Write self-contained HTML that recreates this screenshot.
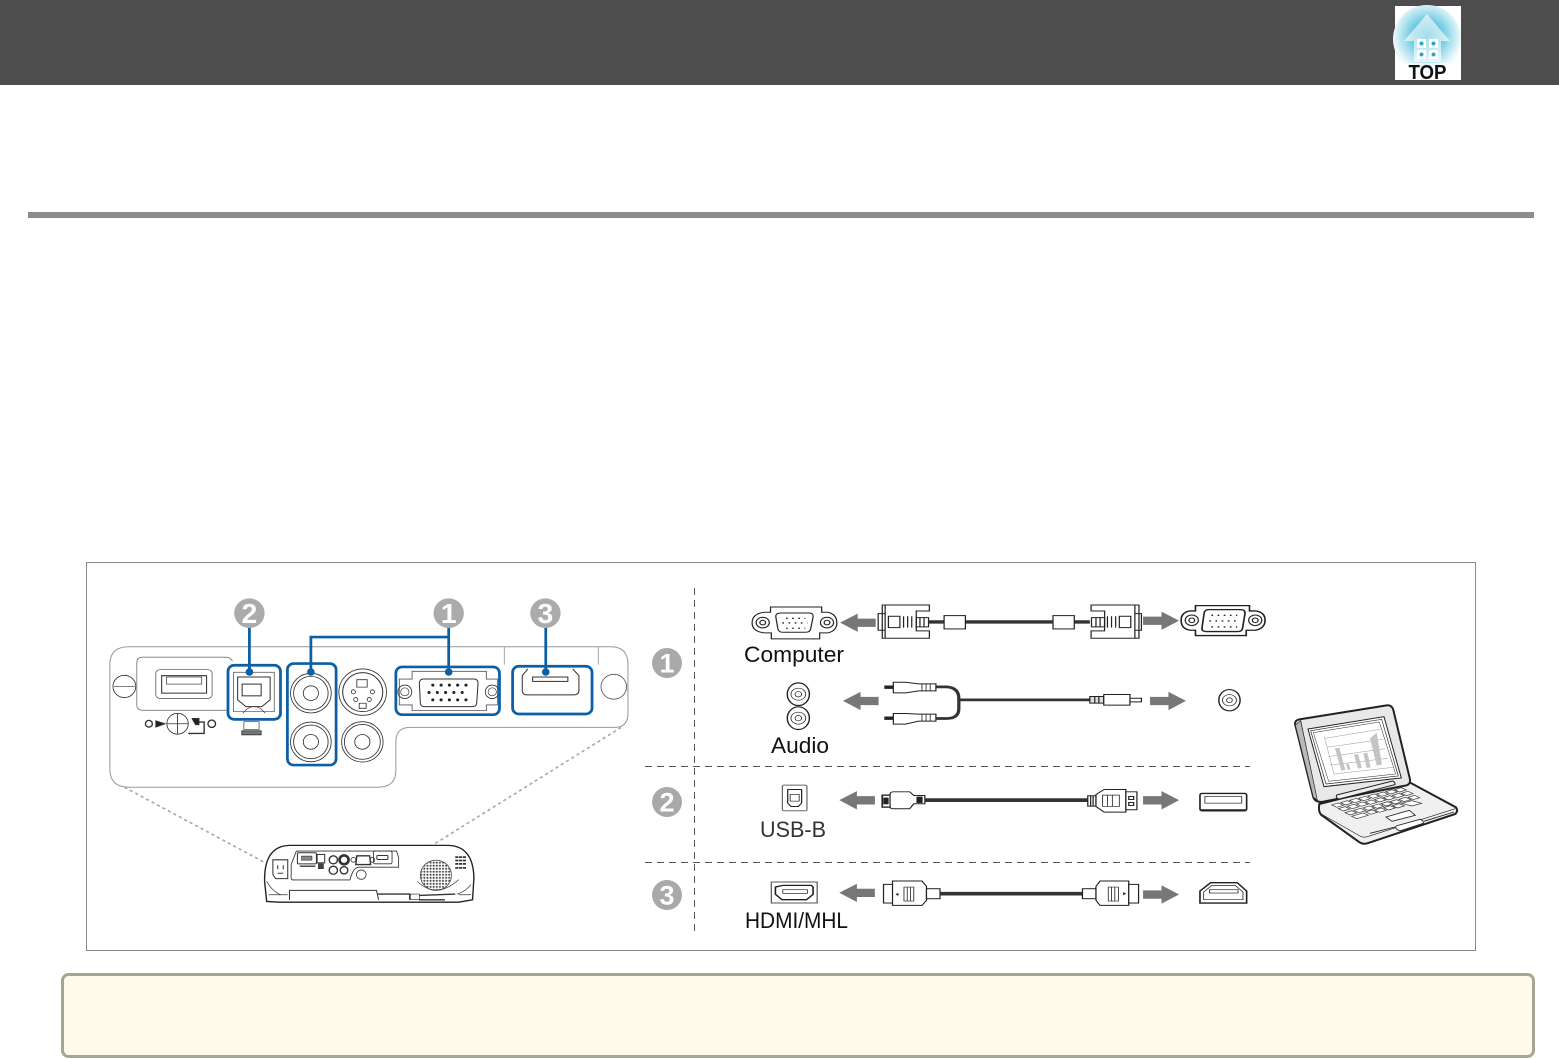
<!DOCTYPE html>
<html><head><meta charset="utf-8"><title>Connecting</title>
<style>
html,body{margin:0;padding:0;background:#fff;width:1559px;height:1059px;overflow:hidden}
svg{position:absolute;left:0;top:0}
text{font-family:"Liberation Sans",sans-serif}
.soft{filter:blur(.35px)}
</style></head><body>
<svg width="1559" height="1059" viewBox="0 0 1559 1059" xmlns="http://www.w3.org/2000/svg">
<defs>
<radialGradient id="g" cx=".5" cy=".45" r=".5"><stop offset="0" stop-color="#14a2cc"/><stop offset=".35" stop-color="#55bfdc"/><stop offset=".7" stop-color="#a8e0ee"/><stop offset="1" stop-color="#eef9fc"/></radialGradient>
<pattern id="dots" width="9" height="9" patternUnits="userSpaceOnUse"><rect width="9" height="9" fill="#fff"/><circle cx="4.500" cy="4.500" r="3" fill="#444"/></pattern>
<symbol id="al" overflow="visible"><path d="M0 27 L43 0 V15 H87 V40 H43 V55Z" fill="#777" stroke="none"/></symbol>
<symbol id="ar" overflow="visible"><path d="M88 27 L45 0 V15 H0 V40 H45 V55Z" fill="#777" stroke="none"/></symbol>
</defs>
<!-- page chrome -->
<rect x="0" y="0" width="1559" height="85" fill="#4d4d4d"/>
<rect x="1395" y="6" width="66" height="74" fill="#fff"/>
<circle cx="1427" cy="39" r="34" fill="url(#g)"/>
<path d="M1427 14 L1450 41 H1441 V62 H1414 V41 H1404Z" fill="#fff" fill-opacity=".62"/>
<g fill="#fff"><rect x="1417" y="39" width="9" height="9" rx="1"/><rect x="1429" y="39" width="9" height="9" rx="1"/><rect x="1417" y="50" width="9" height="9" rx="1"/><rect x="1429" y="50" width="9" height="9" rx="1"/></g>
<g fill="#2aa6cc"><circle cx="1421.500" cy="43.500" r="2"/><circle cx="1433.500" cy="43.500" r="2"/><circle cx="1421.500" cy="54.500" r="2"/><circle cx="1433.500" cy="54.500" r="2"/></g>
<rect x="1405" y="63" width="44" height="17" fill="#fff" fill-opacity=".55"/>
<text x="1408.500" y="79" font-size="20" font-weight="700" fill="#111" textLength="38" lengthAdjust="spacingAndGlyphs">TOP</text>
<rect x="28" y="212" width="1506" height="6" fill="#8c8c8c"/>
<rect x="86.500" y="562.500" width="1389" height="388" fill="#fff" stroke="#8a8a8a"/>
<rect x="62.500" y="974.500" width="1471" height="82" rx="6" fill="#fffbea" stroke="#aaa593" stroke-width="3"/>
<!-- dashed separators -->
<g stroke="#555" stroke-width="1" stroke-dasharray="7 5" fill="none">
<path d="M694.500 588 V932"/><path d="M645 766.500 H1250"/><path d="M645 862.500 H1250"/>
</g>
<!-- left panel: zoom coordinates -->
<g class="soft" transform="translate(99.500 589) scale(.3454 .336)" fill="none" stroke="#333" stroke-width="2.500">
<path d="M30 225 Q30 172 85 172 H1480 Q1530 172 1530 225 V370 Q1530 412 1490 412 H900 Q858 412 858 455 V540 Q858 590 805 590 H85 Q30 590 30 535Z" stroke="#999" stroke-width="3"/>
<path d="M1172 172 V225 M1444 172 V225" stroke="#999"/>
<path d="M385 215 Q380 203 365 203 H125 Q108 203 108 220 V345 Q108 361 125 361 H370" stroke="#777"/>
<circle cx="72" cy="290" r="33"/><path d="M42 290 H102" stroke-width="2"/>
<rect x="163" y="240" width="163" height="86" rx="12" stroke="#666"/>
<path d="M180 258 H310 V310 H180Z" stroke-width="3"/>
<rect x="194" y="262" width="102" height="21" stroke-width="2"/>
<!-- lock symbol -->
<circle cx="143" cy="401" r="10" stroke-width="4"/><path d="M163 392 L190 401 L163 411Z" fill="#222"/>
<circle cx="226" cy="401" r="31"/><path d="M195 401 H257 M226 370 V432"/>
<path d="M268 386 H287 V396 H303 V430 H257" stroke-width="4"/><path d="M268 386 H288 V404 H278Z" fill="#222"/>
<circle cx="325" cy="401" r="11" stroke-width="4"/>
<!-- usb b -->
<path d="M388 248 V365 H506 V248 Z" stroke="#666"/>
<path d="M400 262 H494 V330 L470 350 H424 L400 330Z" stroke-width="3"/>
<rect x="413" y="283" width="55" height="35" stroke-width="3"/>
<path d="M415 370 Q430 350 448 350 Q465 350 480 370" stroke-width="2"/>
<path d="M418 395 H462 V418 H418Z" stroke-width="2"/><path d="M412 422 H468 V434 H412Z" fill="#777" stroke="#333"/>
<!-- RCA -->
<g stroke-width="2.500">
<circle cx="612" cy="310" r="59"/><circle cx="612" cy="310" r="50"/><circle cx="612" cy="310" r="22"/>
<circle cx="612" cy="455" r="59"/><circle cx="612" cy="455" r="50"/><circle cx="612" cy="455" r="22"/>
<circle cx="761" cy="455" r="60"/><circle cx="761" cy="455" r="52"/><circle cx="761" cy="455" r="22"/>
<circle cx="762" cy="307" r="69"/><circle cx="762" cy="307" r="58" stroke-width="3"/>
<path d="M745 270 H775 V292 H745Z M752 340 H772 V355 H752Z" fill="#fff"/>
<circle cx="735" cy="306" r="6"/><circle cx="790" cy="306" r="6"/><circle cx="742" cy="329" r="6"/><circle cx="781" cy="329" r="6"/>
</g>
<!-- VGA -->
<path d="M905 245 H1120 V268 H1152 V345 H1120 V362 H905 V345 H868 V268 H905Z" stroke="#555"/>
<circle cx="884" cy="306" r="20"/><circle cx="884" cy="306" r="12" stroke-width="2"/>
<circle cx="1137" cy="306" r="20"/><circle cx="1137" cy="306" r="12" stroke-width="2"/>
<path d="M938 268 H1085 Q1095 268 1096 280 L1092 340 Q1091 350 1080 350 H940 Q930 350 929 340 L926 280 Q927 268 938 268Z" stroke-width="3"/>
<g fill="#222" stroke="none">
<circle cx="965" cy="286" r="4.500"/><circle cx="989" cy="286" r="4.500"/><circle cx="1013" cy="286" r="4.500"/><circle cx="1037" cy="286" r="4.500"/><circle cx="1061" cy="286" r="4.500"/>
<circle cx="954" cy="308" r="4.500"/><circle cx="978" cy="308" r="4.500"/><circle cx="1002" cy="308" r="4.500"/><circle cx="1026" cy="308" r="4.500"/><circle cx="1050" cy="308" r="4.500"/>
<circle cx="965" cy="330" r="4.500"/><circle cx="989" cy="330" r="4.500"/><circle cx="1013" cy="330" r="4.500"/><circle cx="1037" cy="330" r="4.500"/><circle cx="1061" cy="330" r="4.500"/>
</g>
<!-- HDMI -->
<path d="M1240 238 L1224 258 V302 Q1224 315 1238 315 H1372 Q1388 315 1388 302 V258 L1370 238" stroke-width="3"/>
<rect x="1254" y="262" width="102" height="13" stroke-width="3"/>
<circle cx="1489" cy="291" r="37" stroke="#555"/>
<!-- blue highlights -->
<g stroke="#0b5fa5" stroke-width="8">
<rect x="372" y="227" width="152" height="161" rx="18"/>
<rect x="544" y="222" width="141" height="302" rx="18"/>
<rect x="858" y="232" width="300" height="142" rx="18"/>
<rect x="1196" y="230" width="230" height="142" rx="18"/>
<path d="M434 110 V247 M612 247 V143 H1011 M1011 110 V247 M1292 110 V247"/>
<g fill="#0b5fa5" stroke="none"><circle cx="434" cy="247" r="11"/><circle cx="612" cy="247" r="11"/><circle cx="1011" cy="247" r="11"/><circle cx="1292" cy="247" r="11"/></g>
</g>
<!-- number badges -->
<g stroke="none" fill="#ababab"><circle cx="434" cy="72" r="44"/><circle cx="1011" cy="72" r="44"/><circle cx="1291" cy="72" r="44"/></g>
<g stroke="none" fill="#fff" font-size="82" font-weight="700" text-anchor="middle"><text x="434" y="101">2</text><text x="1011" y="101">1</text><text x="1291" y="101">3</text></g>
<!-- dotted callout -->
<path d="M72 590 L480 815 M1510 412 L862 828" stroke="#aaa" stroke-width="5" stroke-dasharray="9 9"/>
<!-- projector -->
<path d="M478 870 Q476 765 550 763 H1010 Q1082 765 1084 860 L1080 925 L1040 932 H520 L484 930Z" fill="#fff" stroke="#222" stroke-width="4"/>
<path d="M570 780 H860 L866 800 V828 H750 Q735 828 725 866 H560 Q553 866 555 850 V820 Z" stroke-width="2.500"/>
<path d="M502 806 H545 V862 H510 L502 850Z" stroke-width="3"/><path d="M516 822 V834 M532 822 V834 M516 846 H532" stroke-width="3"/>
<rect x="573" y="785" width="55" height="33" rx="3" stroke-width="3"/><rect x="585" y="795" width="30" height="12" fill="#888" stroke-width="2"/>
<rect x="630" y="790" width="22" height="25" stroke-width="3"/><rect x="634" y="818" width="14" height="14" fill="#444"/>
<path d="M580 825 H625" stroke-width="4"/>
<g stroke-width="4"><circle cx="677" cy="806" r="12"/><circle cx="677" cy="837" r="12"/><circle cx="708" cy="806" r="13" stroke-width="8"/><circle cx="708" cy="837" r="11"/></g>
<path d="M745 794 H782 L785 820 H742Z" stroke-width="4"/><circle cx="735" cy="806" r="7"/><circle cx="790" cy="806" r="7"/>
<rect x="793" y="780" width="54" height="38" rx="5" stroke-width="2.500"/><rect x="803" y="793" width="32" height="12" rx="3" stroke-width="3"/>
<circle cx="758" cy="850" r="14" stroke-width="2.500"/>
<circle cx="974" cy="852" r="45" fill="url(#dots)" stroke="#555"/>
<path d="M1030 798 H1062 M1030 808 H1062 M1030 818 H1062 M1030 830 H1062" stroke-width="5" stroke-dasharray="9 2"/>
<path d="M920 870 Q975 925 1040 865" stroke-width="2"/>
<path d="M550 925 V897 H802 L808 925" stroke-width="3"/>
<path d="M806 908 H898 V925 M925 912 L1030 908 M925 925 H1000" stroke-width="4"/>
<rect x="900" y="908" width="26" height="16" stroke-width="2"/>
<path d="M490 910 H545 M1040 910 H1075" stroke-width="2"/>
<path d="M484 870 Q500 900 525 910 M1075 880 Q1060 900 1035 908" stroke-width="2"/>
</g>
<!-- row 1 & audio: zoom coordinates -->
<g class="soft" transform="translate(639.500 590.300) scale(.4094 .333)" fill="none" stroke="#222" stroke-width="3">
<!-- left VGA port -->
<path d="M320 50 H445 V66 H460 Q482 72 482 98 Q482 122 460 128 H440 V146 H322 V128 H305 Q275 124 275 98 Q275 70 305 66 H320Z"/>
<circle cx="301" cy="97" r="16"/><circle cx="301" cy="97" r="7"/><circle cx="458" cy="97" r="16"/><circle cx="458" cy="97" r="7"/>
<path d="M345 68 H415 Q425 68 424 80 L418 116 Q417 126 405 126 H350 Q340 126 338 116 L333 80 Q332 68 345 68Z"/>
<g stroke="#222" stroke-width="4" stroke-dasharray="4 11" fill="none"><path d="M358 84 H405"/><path d="M349 98 H410"/><path d="M358 114 H405"/></g>
<use href="#al" transform="translate(490 70)"/>
<!-- left VGA connector -->
<path d="M593 44 H708 V62 H676 V122 H708 V144 H593 Z M600 44 V144 M583 70 H600 V120 H583Z"/>
<rect x="608" y="78" width="28" height="34"/><path d="M645 78 V112 M655 78 V112 M665 78 V112"/>
<path d="M676 82 H706 V110 H676Z M685 82 V110 M695 82 V110" />
<path d="M706 95 H744 M796 95 H1010 M1062 95 H1100" stroke="#333" stroke-width="10"/>
<rect x="744" y="76" width="52" height="40" fill="#fff"/><rect x="1010" y="76" width="52" height="40" fill="#fff"/>
<!-- right connector -->
<path d="M1220 44 H1103 V62 H1136 V122 H1103 V144 H1220 Z M1210 44 V144 M1226 70 H1210 V120 H1226Z"/>
<rect x="1172" y="78" width="28" height="34"/><path d="M1163 78 V112 M1153 78 V112 M1143 78 V112"/>
<path d="M1104 82 H1136 V110 H1104Z M1115 82 V110 M1125 82 V110"/>
<use href="#ar" transform="translate(1230 64)"/>
<!-- right VGA port -->
<path d="M1358 46 H1490 V62 H1505 Q1528 66 1528 90 Q1528 114 1505 120 H1482 V136 H1358 V120 H1345 Q1323 116 1323 90 Q1323 66 1345 62 H1358Z" stroke-width="4"/>
<circle cx="1349" cy="90" r="16"/><circle cx="1349" cy="90" r="7"/><circle cx="1504" cy="90" r="16"/><circle cx="1504" cy="90" r="7"/>
<path d="M1390 58 H1468 Q1480 58 1479 70 L1473 114 Q1472 124 1460 124 H1385 Q1372 124 1374 112 L1379 70 Q1380 58 1390 58Z" stroke-width="4"/>
<g stroke="#222" stroke-width="4" stroke-dasharray="4 11"><path d="M1397 75 H1460"/><path d="M1392 92 H1465"/><path d="M1397 110 H1460"/></g>
<!-- audio -->
<g stroke-width="3.500"><ellipse cx="388" cy="312" rx="27" ry="34"/><circle cx="388" cy="312" r="18" stroke-width="2"/><circle cx="388" cy="312" r="8" stroke-width="2"/>
<ellipse cx="388" cy="384" rx="27" ry="34"/><circle cx="388" cy="384" r="18" stroke-width="2"/><circle cx="388" cy="384" r="8" stroke-width="2"/>
<ellipse cx="1441" cy="330" rx="26" ry="32"/><circle cx="1441" cy="330" r="17" stroke-width="2"/><circle cx="1441" cy="330" r="7" stroke-width="2"/></g>
<use href="#al" transform="translate(497 305)"/>
<path d="M598 291 H620 M598 384 H620" stroke-width="10"/>
<path d="M620 276 H650 L682 281 H724 V302 H682 L650 308 H620Z M620 370 H650 L682 372 H724 V393 H682 L650 402 H620Z" fill="#fff"/>
<path d="M690 281 V302 M700 281 V302 M710 281 V302 M690 372 V393 M700 372 V393 M710 372 V393" stroke-width="2"/>
<path d="M724 290 H750 Q780 292 780 325 V355 Q780 385 750 385 H724" stroke="#333" stroke-width="8"/>
<path d="M780 329 H1100" stroke="#333" stroke-width="8"/>
<path d="M1100 319 H1134 V339 H1100Z M1112 319 V339 M1122 319 V339" fill="#ddd"/>
<path d="M1134 313 H1198 V345 H1134Z M1198 324 H1226 V335 H1198Z" fill="#fff"/>
<use href="#ar" transform="translate(1247 305)"/>
</g>
<!-- rows 2 & 3 -->
<g class="soft" transform="translate(639.500 770.500) scale(.4094 .333)" fill="none" stroke="#222" stroke-width="3">
<rect x="349" y="44" width="60" height="77" rx="4" stroke="#666"/><path d="M362 57 H396 V98 L388 108 H370 L362 98Z" stroke-width="3"/><rect x="368" y="72" width="22" height="20" stroke-width="2"/>
<use href="#al" transform="translate(488 62)"/>
<rect x="593" y="74" width="20" height="36" stroke-width="4"/><rect x="597" y="83" width="10" height="17" fill="#222"/>
<path d="M612 72 Q612 64 620 64 H660 L670 75 H697 V100 H670 L660 115 H620 Q612 115 612 108Z" fill="#fff" stroke-width="3"/><rect x="678" y="80" width="12" height="16" fill="#222"/>
<path d="M697 89 H1095" stroke="#333" stroke-width="11"/>
<path d="M1095 76 H1115 V107 H1095Z M1102 76 V107 M1108 76 V107" fill="#fff"/>
<path d="M1115 72 L1135 57 H1188 V125 H1135 L1115 108Z" fill="#fff"/>
<path d="M1131 74 H1172 V108 H1131Z M1143 74 V108 M1155 74 V108" stroke-width="2"/>
<path d="M1188 64 H1215 V118 H1188Z" fill="#fff" stroke-width="3"/><rect x="1195" y="78" width="12" height="9" stroke-width="3"/><rect x="1195" y="96" width="12" height="9" stroke-width="3"/>
<use href="#ar" transform="translate(1230 62)"/>
<rect x="1369" y="69" width="114" height="52" rx="5" stroke-width="4"/><rect x="1381" y="78" width="90" height="20" stroke-width="2"/><path d="M1370 119 H1482" stroke-width="5"/>
<!-- row 3 -->
<path d="M322 335 H434 V398 H322Z" stroke="#555"/>
<path d="M350 345 H420 L424 350 V372 L408 388 H348 L332 372 V350Z" stroke-width="4"/><rect x="350" y="358" width="60" height="11" stroke-width="2"/>
<use href="#al" transform="translate(488 340)"/>
<rect x="596" y="342" width="26" height="56" fill="#fff"/>
<path d="M618 332 H690 L701 348 V390 L690 405 H618Z" fill="#fff"/>
<path d="M646 350 H670 V392 H646Z M654 350 V392 M662 350 V392" stroke-width="2"/><path d="M632 368 L626 372 L632 376Z" fill="#222" stroke-width="1"/>
<rect x="701" y="355" width="33" height="30" fill="#fff"/>
<path d="M734 370 H1082" stroke="#333" stroke-width="11"/>
<rect x="1082" y="355" width="33" height="30" fill="#fff"/>
<path d="M1195 332 H1125 L1115 348 V390 L1125 405 H1195Z" fill="#fff"/>
<path d="M1145 350 H1170 V392 H1145Z M1153 350 V392 M1161 350 V392" stroke-width="2"/><path d="M1182 366 L1188 370 L1182 374Z" fill="#222" stroke-width="1"/>
<rect x="1195" y="342" width="24" height="56" fill="#fff"/>
<use href="#ar" transform="translate(1230 345)"/>
<path d="M1395 337 H1460 L1483 362 V398 H1369 V362Z" stroke-width="4"/>
<path d="M1398 345 H1455 L1474 365 V388 H1378 V365Z" stroke-width="2"/><rect x="1392" y="358" width="70" height="10" stroke-width="2"/>
</g>
<!-- circled numbers -->
<g fill="#a9a9a9"><ellipse cx="667" cy="663" rx="15" ry="15"/><ellipse cx="667" cy="802" rx="15" ry="15"/><ellipse cx="667" cy="895" rx="15" ry="15"/></g>
<g fill="#fff" font-size="27" font-weight="700" text-anchor="middle"><text x="667" y="672.500">1</text><text x="667" y="811.500">2</text><text x="667" y="904.500">3</text></g>
<!-- labels -->
<g fill="#111" font-size="22">
<text x="744" y="662" textLength="100" lengthAdjust="spacingAndGlyphs">Computer</text>
<text x="771" y="753" textLength="58" lengthAdjust="spacingAndGlyphs">Audio</text>
<text x="760" y="837" textLength="66" lengthAdjust="spacingAndGlyphs" fill="#333">USB-B</text>
<text x="745" y="928" textLength="103" lengthAdjust="spacingAndGlyphs">HDMI/MHL</text>
</g>
<!-- laptop -->
<g class="soft" transform="translate(1280 690) scale(.3333)" fill="none" stroke="#222" stroke-width="3">
<path d="M118 342 L385 275 L528 352 Q536 362 526 372 L262 460 Q248 464 236 455 L124 375 Q114 365 118 342Z" fill="#f0f0f0" stroke-width="6"/>
<path d="M124 372 L240 438 Q250 444 262 440 L526 356" stroke-width="2"/>
<path d="M46 105 Q42 92 58 88 L320 46 Q336 45 340 60 L390 268 Q392 282 380 286 L125 336 Q105 336 100 322Z" fill="#e8e8e8" stroke-width="6"/>
<path d="M62 92 L110 325" stroke-width="2"/><path d="M46 105 L62 92 L112 330 L100 322Z" fill="#b8b8b8" stroke-width="2"/>
<path d="M84 117 L312 80 L364 264 L132 290Z" fill="#fff" stroke-width="3"/>
<path d="M92 122 L305 88 L355 258 L138 282Z" stroke-width="2"/><path d="M100 128 L298 96 L347 252 L146 274Z" fill="#fff" stroke-width="1.500"/>
<g stroke="#999" stroke-width="1.500"><path d="M135 145 L300 118 M140 172 L308 148 M145 200 L316 176 M150 225 L324 205 M133 140 L162 252 L340 232"/></g>
<g fill="#c4c4c4" stroke="none"><path d="M165 175 L178 173 L196 240 L184 242Z"/><path d="M198 222 L206 221 L212 238 L204 240Z"/><path d="M222 194 L234 192 L246 234 L234 236Z"/><path d="M250 190 L262 188 L272 232 L260 234Z"/><path d="M270 145 L290 128 L306 224 L290 226Z"/></g>
<path d="M170 315 L338 273 Q346 276 345 284 L178 327 Q166 325 170 315Z" fill="#eee" stroke-width="3"/>
<g fill="#fff" stroke-width="2" stroke="#333">
<path d="M155 345 L175 339 L190 346 L170 352Z"/><path d="M182 338 L202 332 L217 339 L197 345Z"/><path d="M209 331 L229 325 L244 332 L224 338Z"/><path d="M236 325 L256 319 L271 326 L251 332Z"/><path d="M263 318 L283 312 L298 319 L278 325Z"/><path d="M290 312 L310 306 L325 313 L305 319Z"/><path d="M317 305 L337 299 L352 306 L332 312Z"/><path d="M344 299 L364 293 L379 300 L359 306Z"/>
<path d="M175 356 L195 350 L210 357 L190 363Z"/><path d="M202 349 L222 343 L237 350 L217 356Z"/><path d="M229 342 L249 336 L264 343 L244 349Z"/><path d="M256 336 L276 330 L291 337 L271 343Z"/><path d="M283 329 L303 323 L318 330 L298 336Z"/><path d="M310 323 L330 317 L345 324 L325 330Z"/><path d="M337 316 L357 310 L372 317 L352 323Z"/><path d="M364 310 L384 304 L399 311 L379 317Z"/>
<path d="M195 368 L215 362 L230 369 L210 375Z"/><path d="M222 361 L242 355 L257 362 L237 368Z"/><path d="M249 354 L269 348 L284 355 L264 361Z"/><path d="M276 348 L296 342 L311 349 L291 355Z"/><path d="M303 341 L323 335 L338 342 L318 348Z"/><path d="M330 335 L350 329 L365 336 L345 342Z"/><path d="M357 328 L377 322 L392 329 L372 335Z"/><path d="M384 322 L404 316 L419 323 L399 329Z"/>
<path d="M215 379 L250 369 L265 376 L230 386Z"/><path d="M257 366 L277 360 L292 367 L272 373Z"/><path d="M284 360 L304 354 L319 361 L299 367Z"/><path d="M311 353 L331 347 L346 354 L326 360Z"/><path d="M338 347 L358 341 L373 348 L353 354Z"/><path d="M365 340 L395 332 L425 340 L395 348Z"/>
</g>
<path d="M318 381 L388 361 L406 376 L336 394Z" fill="#fff" stroke-width="2.500"/>
<path d="M348 408 L420 388 Q432 392 430 400 L362 422 Q345 420 348 408Z" fill="#fff" stroke-width="2.500"/>
<path d="M270 430 L345 411 M432 394 L522 366" stroke-width="2.500"/>
</g>
</svg>
</body></html>
